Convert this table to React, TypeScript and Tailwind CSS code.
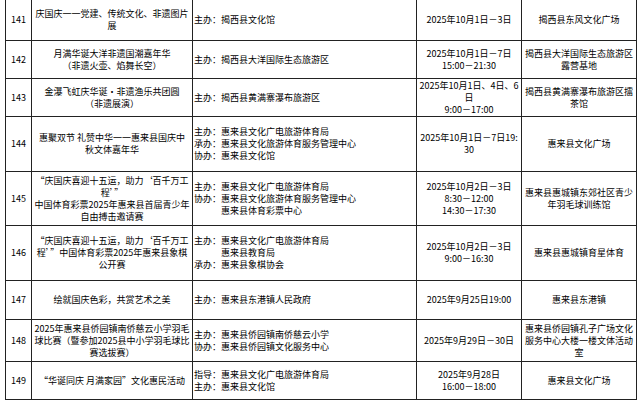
import React from "react";

type L = { t: string; indent?: boolean };
type Row = {
  h: string;
  num: string;
  title: string[];
  org: L[];
  date: string[];
  venue: string[];
};

const rows: Row[] = [
  {
    h: "h-[41px]",
    num: "141",
    title: ["庆国庆一一党建、传统文化、非遗图片", "展"],
    org: [{ t: "主办：揭西县文化馆" }],
    date: ["2025年10月1日－3日"],
    venue: ["揭西县东风文化广场"],
  },
  {
    h: "h-[38px]",
    num: "142",
    title: ["月满华诞大洋非遗国潮嘉年华", "（非遗火壶、焰舞长空）"],
    org: [{ t: "主办：揭西县大洋国际生态旅游区" }],
    date: ["2025年10月1日－7日", "15:00－21:30"],
    venue: ["揭西县大洋国际生态旅游区", "露营基地"],
  },
  {
    h: "h-[38px]",
    num: "143",
    title: ["金瀑飞虹庆华诞·非遗渔乐共团圆", "（非遗展演）"],
    org: [{ t: "主办：揭西县黄满寨瀑布旅游区" }],
    date: ["2025年10月1日、4日、6", "日", "9:00－17:00"],
    venue: ["揭西县黄满寨瀑布旅游区擂", "茶馆"],
  },
  {
    h: "h-[55px]",
    num: "144",
    title: ["惠聚双节 礼赞中华一一惠来县国庆中", "秋文体嘉年华"],
    org: [
      { t: "主办：惠来县文化广电旅游体育局" },
      { t: "承办：惠来县文化旅游体育服务管理中心" },
      { t: "协办：惠来县文化馆" },
    ],
    date: ["2025年10月1日－7日19:", "30"],
    venue: ["惠来县文化广场"],
  },
  {
    h: "h-[54px]",
    num: "145",
    title: [
      "“庆国庆喜迎十五运，助力‘百千万工",
      "程’”",
      "中国体育彩票2025年惠来县首届青少年",
      "自由搏击邀请赛",
    ],
    org: [
      { t: "主办：惠来县文化广电旅游体育局" },
      { t: "协办：惠来县文化旅游体育服务管理中心" },
      { t: "惠来县体育彩票中心", indent: true },
    ],
    date: ["2025年10月2日－3日", "8:30－12:00", "14:30－17:30"],
    venue: ["惠来县惠城镇东郊社区青少", "年羽毛球训练馆"],
  },
  {
    h: "h-[55px]",
    num: "146",
    title: [
      "“庆国庆喜迎十五运，助力‘百千万工",
      "程’”中国体育彩票2025年惠来县象棋",
      "公开赛",
    ],
    org: [
      { t: "主办：惠来县文化广电旅游体育局" },
      { t: "惠来县教育局", indent: true },
      { t: "承办：惠来县象棋协会" },
    ],
    date: ["2025年10月2日－3日", "9:00－16:30"],
    venue: ["惠来县惠城镇育星体育"],
  },
  {
    h: "h-[39px]",
    num: "147",
    title: ["绘就国庆色彩，共赏艺术之美"],
    org: [{ t: "主办：惠来县东港镇人民政府" }],
    date: ["2025年9月25日19:00"],
    venue: ["惠来县东港镇"],
  },
  {
    h: "h-[42px]",
    num: "148",
    title: [
      "2025年惠来县侨园镇南侨慈云小学羽毛",
      "球比赛（暨参加2025县中小学羽毛球比",
      "赛选拔赛）",
    ],
    org: [
      { t: "主办：惠来县侨园镇南侨慈云小学" },
      { t: "协办：惠来县侨园镇文化服务中心" },
    ],
    date: ["2025年9月29日－30日"],
    venue: ["惠来县侨园镇孔子广场文化", "服务中心大楼一楼文体活动", "室"],
  },
  {
    h: "h-[38px]",
    num: "149",
    title: ["“华诞同庆 月满家园”文化惠民活动"],
    org: [
      { t: "指导：惠来县文化广电旅游体育局" },
      { t: "主办：惠来县文化馆" },
    ],
    date: ["2025年9月28日", "16:00－18:00"],
    venue: ["惠来县文化广场"],
  },
];

export default function App() {
  return (
    <div
      className="w-[640px] h-[404px] bg-white overflow-hidden text-[9px] text-black"
      style={{ fontFamily: '"Noto Sans CJK SC", "Noto Sans", sans-serif' }}
    >
      <div className="ml-[5px] w-[632px] border-l border-[#222]">
        {rows.map((r) => (
          <div key={r.num} className={`flex ${r.h} border-b border-[#222]`}>
            <div className="w-[26px] shrink-0 border-r border-[#222] flex items-center justify-center">
              {r.num}
            </div>
            <div className="w-[161px] shrink-0 border-r border-[#222] flex flex-col items-center justify-center text-center leading-[12px] whitespace-nowrap">
              {r.title.map((t, i) => (
                <div key={i}>{t}</div>
              ))}
            </div>
            <div className="w-[224px] shrink-0 border-r border-[#222] flex flex-col justify-center pl-[1px] leading-[12px] whitespace-nowrap">
              {r.org.map((o, i) => (
                <div key={i} className={o.indent ? "pl-[27px]" : ""}>
                  {o.t}
                </div>
              ))}
            </div>
            <div className="w-[105px] shrink-0 border-r border-[#222] flex flex-col items-center justify-center text-center leading-[12px] whitespace-nowrap">
              {r.date.map((t, i) => (
                <div key={i}>{t}</div>
              ))}
            </div>
            <div className="w-[115px] shrink-0 border-r border-[#222] flex flex-col items-center justify-center text-center leading-[12px] whitespace-nowrap">
              {r.venue.map((t, i) => (
                <div key={i}>{t}</div>
              ))}
            </div>
          </div>
        ))}
      </div>
    </div>
  );
}
